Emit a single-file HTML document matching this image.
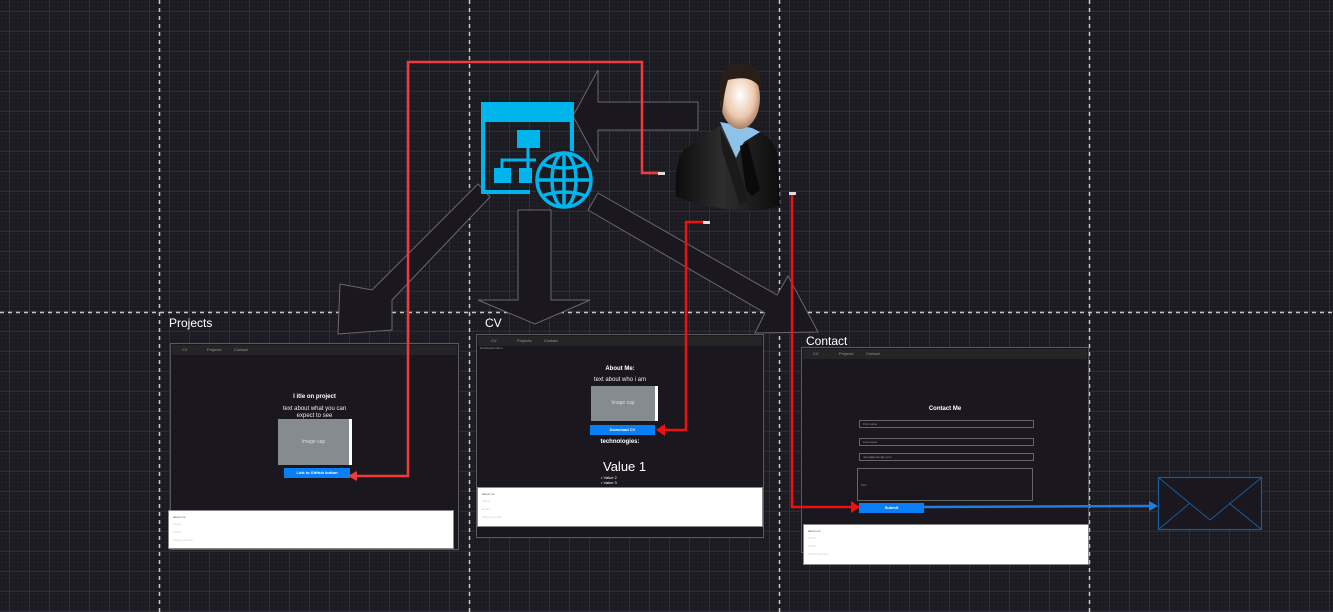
<!DOCTYPE html>
<html><head><meta charset="utf-8"><style>
html,body{margin:0;padding:0;width:1333px;height:612px;overflow:hidden;background:#1c1a21;font-family:"Liberation Sans",sans-serif}
.abs{position:absolute}
.frame{position:absolute;border:1px solid #5a585e;background:#1a171e;box-sizing:border-box}
.nav{position:absolute;left:1px;right:1px;top:1px;height:10px;background:#252427;font-size:4px;color:#999}
.nav span{position:absolute;top:2px}
.foot{position:absolute;background:#fff;border:1px solid #888;box-sizing:border-box;font-size:3px;color:#ccc}
.t{position:absolute;color:#fff;font-weight:bold;text-align:center;white-space:nowrap}
.img{position:absolute;background:#868b90;border-right:3px solid #fff;color:#ddd;font-size:5px;text-align:center;box-sizing:border-box}
.btn{position:absolute;background:#0a7ff5;color:#fff;font-size:4px;font-weight:bold;text-align:center}
.inp{position:absolute;border:1px solid #666;box-sizing:border-box;font-size:3px;color:#999;padding-left:3px}
.lbl{position:absolute;color:#fff;font-size:12px}
</style></head><body>
<svg class="abs" style="left:0;top:0" width="1333" height="612">
<defs>
<pattern id="mn" width="4" height="4" patternUnits="userSpaceOnUse" x="2" y="3"><path d="M4 0V4M0 4H4" stroke="#26242b" stroke-width="1"/></pattern>
<pattern id="mj" width="20" height="20" patternUnits="userSpaceOnUse" x="-10.5" y="-8.5"><path d="M20 0V20M0 20H20" stroke="#3d3b42" stroke-width="1"/></pattern>
<radialGradient id="face" cx="0.5" cy="0.45" r="0.6"><stop offset="0" stop-color="#fff"/><stop offset="0.6" stop-color="#ecc9ad"/><stop offset="1" stop-color="#9a6c52"/></radialGradient>
<linearGradient id="suit" x1="0" y1="0" x2="1" y2="0"><stop offset="0" stop-color="#0c0c0c"/><stop offset="0.45" stop-color="#2e2e2e"/><stop offset="1" stop-color="#0c0c0c"/></linearGradient>
</defs>
<rect width="1333" height="612" fill="#1c1a21"/>
<rect width="1333" height="612" fill="url(#mn)"/>
<rect width="1333" height="612" fill="url(#mj)"/>
<g stroke="#c8c8c8" stroke-width="1.5" stroke-dasharray="4,4">
<line x1="159.5" y1="0" x2="159.5" y2="612"/><line x1="469.5" y1="0" x2="469.5" y2="612"/>
<line x1="779.5" y1="0" x2="779.5" y2="612"/><line x1="1089.5" y1="0" x2="1089.5" y2="612"/>
<line x1="0" y1="312.5" x2="1333" y2="312.5"/></g>
<g fill="#1a171e" stroke="#6a686e" stroke-width="1">
<polygon points="698,102 598,102 598,70 573,116 598,162 598,130 698,130"/>
<polygon points="518,210 551,210 551,300 590,300 535,324 478,300 518,300"/>
<polygon points="598,193 777,295 788,276 818,332 755,333 765,313 588,210"/>
<polygon points="478,184 490,197 392,300 392,330 338,334 340,284 372,290"/>
</g>
<rect x="1158.5" y="477.5" width="103" height="52" fill="#1a171e" stroke="#1a5a9a" stroke-width="1.2"/>
<polyline points="1159,478 1210,520 1261,478" fill="none" stroke="#1a5a9a"/>
<line x1="1159" y1="529" x2="1190" y2="503" stroke="#1a5a9a"/><line x1="1261" y1="529" x2="1229" y2="503" stroke="#1a5a9a"/>
<rect x="481" y="102" width="93" height="20" fill="#00b4ec"/>
<path d="M483 122V192H530M572 122V152" stroke="#00b4ec" stroke-width="4" fill="none"/>
<rect x="517" y="130" width="23" height="18" fill="#00b4ec"/>
<rect x="494" y="168" width="17" height="15" fill="#00b4ec"/><rect x="519" y="168" width="13" height="15" fill="#00b4ec"/>
<path d="M528 148V168M502 168V160H536" stroke="#00b4ec" stroke-width="3" fill="none"/>
<circle cx="564" cy="180" r="30" fill="#1c1a21"/>
<g stroke="#00b4ec" stroke-width="3.5" fill="none"><circle cx="564" cy="180" r="27"/><ellipse cx="564" cy="180" rx="12" ry="27"/><line x1="564" y1="153" x2="564" y2="207"/><line x1="537" y1="180" x2="591" y2="180"/><path d="M542 164Q564 172 586 164M542 196Q564 188 586 196"/></g>
<path d="M676 196Q674 162 684 150Q700 138 720 126L758 132Q774 138 778 156L780 206Q760 212 740 210Q700 208 676 196Z" fill="url(#suit)"/>
<path d="M720 122L736 158L744 142L760 132L752 128Z" fill="#8dc3e8"/>
<path d="M740 146L748 142L760 190L752 196L746 190Z" fill="#0a0a0a"/>
<path d="M720 128L736 160L748 200L740 205L722 150Z" fill="#1a1a1a"/>
<ellipse cx="740" cy="98" rx="20" ry="31" fill="url(#face)"/>
<path d="M720 100Q716 64 740 64Q764 64 760 88Q752 74 728 80Q724 92 722 114Z" fill="#2a1e18"/>
</svg>

<div class="lbl" style="left:169px;top:316px">Projects</div>
<div class="lbl" style="left:485px;top:316px">CV</div>
<div class="lbl" style="left:806px;top:334px">Contact</div>

<div class="frame" style="left:170px;top:343px;width:289px;height:207px">
<div class="nav"><span style="left:10px">CV</span><span style="left:35px">Projects</span><span style="left:62px">Contact</span></div>
<div class="t" style="left:0;right:0;top:50px;font-size:6px">I itle on project</div>
<div class="t" style="left:0;right:0;top:62px;font-size:6px;font-weight:normal;color:#eee;line-height:7px">text about what you can<br>expect to see</div>
<div class="img" style="left:107px;top:75px;width:74px;height:46px;line-height:46px">Image cap</div>
<div class="btn" style="left:113px;top:124px;width:66px;height:10px;line-height:10px">Link to GitHub button</div>
</div>
<div class="foot" style="left:168px;top:510px;width:286px;height:39px"><div style="position:absolute;left:4px;top:4px;color:#555">about me</div><div style="position:absolute;left:4px;top:11px">Name<br><br>Email<br><br>Phone Number</div></div>

<div class="frame" style="left:476px;top:334px;width:288px;height:204px">
<div class="nav"><span style="left:13px">CV</span><span style="left:39px">Projects</span><span style="left:66px">Contact</span></div>
<div class="abs" style="left:3px;top:11px;font-size:3px;color:#999">Download button</div>
<div class="t" style="left:0;right:0;top:31px;font-size:6px">About Me:</div>
<div class="t" style="left:0;right:0;top:42px;font-size:6px;font-weight:normal;color:#eee">text about who i am</div>
<div class="img" style="left:114px;top:51px;width:67px;height:35px;line-height:35px">Image cap</div>
<div class="btn" style="left:113px;top:90px;width:65px;height:10px;line-height:10px">Download CV</div>
<div class="t" style="left:0;right:0;top:104px;font-size:6px">technologies:</div>
<div class="abs" style="left:126px;top:124px;color:#fff;font-size:13px">Value 1</div>
<div class="abs" style="left:124px;top:140px;color:#fff;font-size:4px;line-height:5px">• Value 2<br>• Value 3</div>
</div>
<div class="foot" style="left:477px;top:487px;width:286px;height:40px"><div style="position:absolute;left:4px;top:4px;color:#555">about me</div><div style="position:absolute;left:4px;top:11px">Name<br><br>Email<br><br>Phone Number</div></div>

<div class="frame" style="left:801px;top:347px;width:288px;height:206px">
<div class="nav"><span style="left:10px">CV</span><span style="left:36px">Projects</span><span style="left:63px">Contact</span></div>
<div class="t" style="left:0;right:0;top:58px;font-size:6px">Contact Me</div>
<div class="inp" style="left:57px;top:72px;width:175px;height:8px;line-height:6px">First name</div>
<div class="inp" style="left:57px;top:90px;width:175px;height:8px;line-height:6px">Last name</div>
<div class="inp" style="left:57px;top:105px;width:175px;height:8px;line-height:6px">name@example.com</div>
<div class="inp" style="left:55px;top:120px;width:176px;height:33px;line-height:33px">Text</div>
<div class="btn" style="left:57px;top:155px;width:65px;height:10px;line-height:10px">Submit</div>
</div>
<div class="foot" style="left:803px;top:524px;width:286px;height:41px"><div style="position:absolute;left:4px;top:4px;color:#555">about me</div><div style="position:absolute;left:4px;top:11px">Name<br><br>Email<br><br>Phone Number</div></div>

<svg class="abs" style="left:0;top:0" width="1333" height="612">
<g fill="none" stroke="#ef3b3b" stroke-width="2.5">
<polyline points="660,173 642,173 642,62 408,62 408,476 356,476"/>
</g>
<polygon points="348,476 357,471 357,481" fill="#ef3b3b"/>
<g fill="none" stroke="#f01010" stroke-width="2.5">
<polyline points="705,222 686,222 686,430 664,430"/>
<polyline points="792,195 792,507 852,507"/>
</g>
<polygon points="656,430 665,424 665,436" fill="#f01010"/>
<polygon points="860,507 851,501 851,513" fill="#f01010"/>
<line x1="923" y1="507" x2="1150" y2="506" stroke="#1e7fe0" stroke-width="2.5"/>
<polygon points="1158,506 1149,501 1149,511" fill="#1e7fe0"/>
<rect x="658" y="172" width="7" height="3" fill="#ddd"/><rect x="703" y="221" width="7" height="3" fill="#ddd"/><rect x="789" y="192" width="7" height="3" fill="#ddd"/>
</svg>
</body></html>
